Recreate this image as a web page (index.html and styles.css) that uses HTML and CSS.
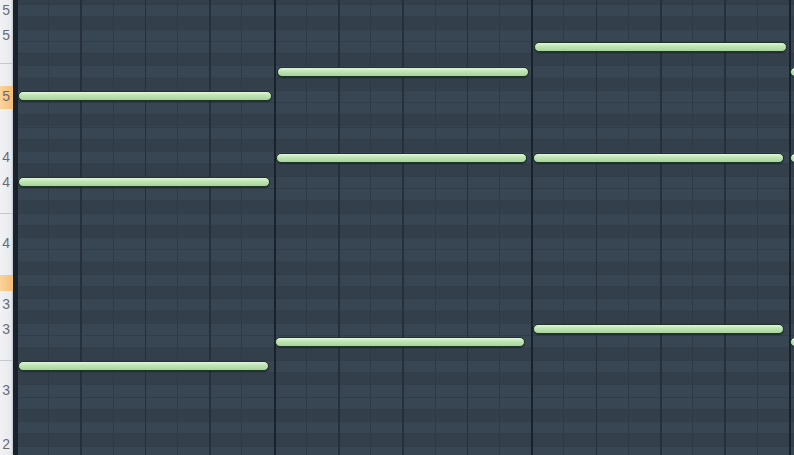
FILE: index.html
```html
<!DOCTYPE html>
<html lang="en">
<head>
  <meta charset="UTF-8" />
  <title>Piano roll</title>
  <link rel="stylesheet" href="styles.css">
</head>
<body>
  <div class="roll">
    <div class="keys" id="keys">
      <!-- labels and marks are made by the script -->
    </div>
    <div class="grid" id="grid">
      <!-- notes are made by the script -->
    </div>
  </div>

  <script>
    const ROW = 12.27;
    const TOP = 4;

    const keyLabels = [
      { row: 0, text: '5' }, { row: 2, text: '5' }, { row: 7, text: '5' },
      { row: 12, text: '4' }, { row: 14, text: '4' }, { row: 19, text: '4' },
      { row: 24, text: '3' }, { row: 26, text: '3' }, { row: 31, text: '3' },
      { row: 35.4, text: '2' },
    ];
    const hotRows = [{ top: 86, height: 23 }, { top: 275, height: 16 }];
    const splits = [63, 213, 360];

    const notes = [
      { row: 7, x: 2, w: 254 }, { row: 14, x: 2, w: 252 }, { row: 29, x: 2, w: 251 },
      { row: 5, x: 261, w: 252 }, { row: 12, x: 260, w: 251 }, { row: 27, x: 259, w: 250 },
      { row: 3, x: 518, w: 253 }, { row: 12, x: 517, w: 251 }, { row: 26, x: 517, w: 251 },
      { row: 5, x: 774, w: 60 }, { row: 12, x: 774, w: 60 }, { row: 27, x: 774, w: 60 },
    ];

    const keys = document.getElementById('keys');
    hotRows.forEach(h => {
      keys.insertAdjacentHTML('beforeend',
        `<div class="key-hot" style="top:${h.top}px;height:${h.height}px"></div>`);
    });
    splits.forEach(y => {
      keys.insertAdjacentHTML('beforeend', `<div class="key-split" style="top:${y}px"></div>`);
    });
    keyLabels.forEach(k => {
      const top = TOP + k.row * ROW;
      keys.insertAdjacentHTML('beforeend',
        `<div class="key-label" style="top:${top.toFixed(2)}px">${k.text}</div>`);
    });

    const grid = document.getElementById('grid');
    notes.forEach(n => {
      const top = TOP + n.row * ROW + 1.4;
      grid.insertAdjacentHTML('beforeend',
        `<div class="note" style="left:${n.x}px;top:${top.toFixed(2)}px;width:${n.w}px"></div>`);
    });
  </script>
</body>
</html>
```

FILE: styles.css
```css
:root {
  --row: 12.27px;
  --octave: 147.24px;
  --bar: 257.6px;
  --beat: 64.4px;
  --step: 32.2px;
  --white-row: #384552;
  --black-row: #33404c;
  --row-line: #313d49;
  --beat-line: #25303a;
  --step-line: #2e3a45;
  --bar-line: #19222b;
}

* {
  box-sizing: border-box;
  margin: 0;
  padding: 0;
}

html, body {
  width: 794px;
  height: 455px;
  overflow: hidden;
  background: var(--white-row);
  font-family: 'Liberation Sans', Arial, sans-serif;
}

.roll {
  display: flex;
  height: 455px;
}

.keys {
  position: relative;
  width: 16px;
  flex-shrink: 0;
  background: linear-gradient(to right, #f1f2f5 0, #e8eaee 11px, #c9cdd3 12.5px);
  border-right: 3px solid #1a222a;
  overflow: hidden;
}
.key-hot {
  position: absolute;
  left: 0;
  right: 0;
  background: linear-gradient(to right, #fbd39c, #f5bd76);
}
.key-split {
  position: absolute;
  left: 0;
  right: 0;
  height: 1px;
  background: #c3c8cf;
}
.key-label {
  position: absolute;
  right: 3px;
  height: var(--row);
  line-height: var(--row);
  font-size: 14px;
  color: #696d73;
}

.grid {
  position: relative;
  flex: 1;
  overflow: hidden;
  background-color: var(--white-row);
  background-image:
    repeating-linear-gradient(to right, var(--bar-line) 0 2px, transparent 2px var(--bar)),
    repeating-linear-gradient(to right, var(--beat-line) 0 1.5px, transparent 1.5px var(--beat)),
    repeating-linear-gradient(to right, var(--step-line) 0 1px, transparent 1px var(--step)),
    repeating-linear-gradient(to bottom, var(--row-line) 0 1px, transparent 1px var(--row)),
    linear-gradient(to bottom,
      transparent 0 12.27px,
      var(--black-row) 12.27px 24.54px,
      transparent 24.54px 49.08px,
      var(--black-row) 49.08px 61.35px,
      transparent 61.35px 73.62px,
      var(--black-row) 73.62px 85.89px,
      transparent 85.89px 110.43px,
      var(--black-row) 110.43px 122.7px,
      transparent 122.7px 134.97px,
      var(--black-row) 134.97px 147.24px);
  background-size: auto, auto, auto, auto, 100% var(--octave);
  background-position: 0 0, 0 0, 0 0, 0 4px, 0 4px;
  background-repeat: repeat, repeat, repeat, repeat, repeat-y;
}

.note {
  position: absolute;
  height: 10px;
  border-radius: 5px;
  border: 1px solid #203626;
  background: linear-gradient(to bottom, #e2f6da 0%, #c0e5b6 40%, #a6d49c 100%);
  box-shadow: 0 1px 1px rgba(10, 20, 15, 0.5);
}
```
